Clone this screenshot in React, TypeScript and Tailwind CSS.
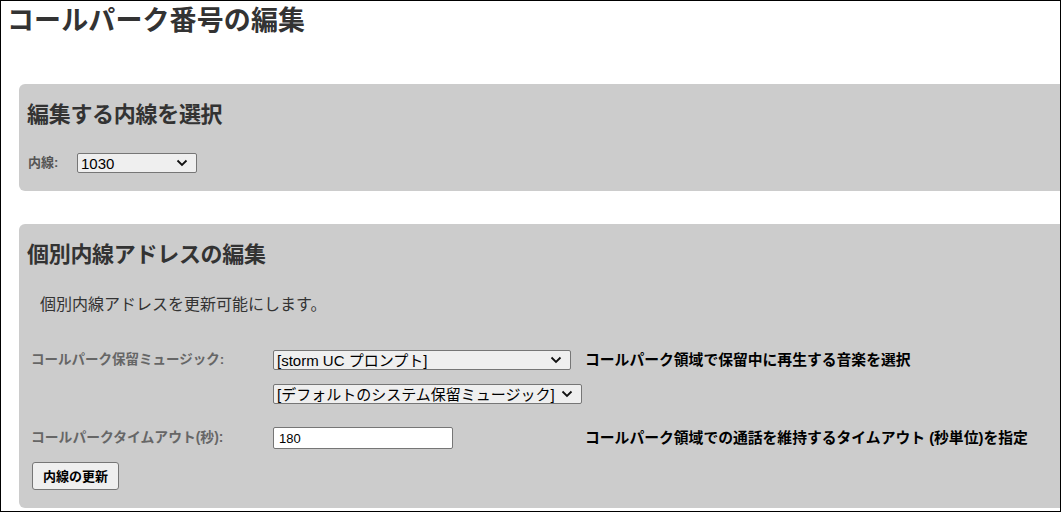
import React from 'react';

const font = 'font-["Liberation_Sans","Noto_Sans_CJK_JP",sans-serif]';

const Chevron: React.FC = () => (
  <svg width="12" height="8" viewBox="0 0 12 8" className="shrink-0">
    <path d="M1.5 1.5 L6 6 L10.5 1.5" fill="none" stroke="#111" strokeWidth="1.8" />
  </svg>
);

const FakeSelect: React.FC<{ value: string; width: string }> = ({ value, width }) => (
  <div
    className={`${width} h-[20px] flex items-center justify-between bg-[#efefef] border border-[#767676] rounded-[2px] pl-[3px] pr-[8px] text-[15px] text-black leading-none`}
  >
    <span className="whitespace-nowrap">{value}</span>
    <Chevron />
  </div>
);

const App: React.FC = () => {
  return (
    <div className={`w-[1061px] h-[512px] border border-black overflow-hidden bg-white ${font}`}>
      <h1 className="text-[27px] font-bold text-[#333] leading-[32px] pl-[6px] pt-[4px] tracking-[0.1px]">
        コールパーク番号の編集
      </h1>

      {/* select extension */}
      <section className="mt-[47px] ml-[18px] bg-[#cccccc] rounded-l-[6px] h-[107px] pt-[18px] pl-[8px]">
        <h2 className="text-[22px] font-bold text-[#333] leading-[26px] tracking-[-0.3px]">編集する内線を選択</h2>
        <div className="flex items-center mt-[25px]">
          <span className="text-[13px] font-bold text-[#555] w-[50px] pl-[1px] leading-[20px]">内線:</span>
          <FakeSelect value="1030" width="w-[120px]" />
        </div>
      </section>

      {/* edit address */}
      <section className="mt-[33px] ml-[18px] bg-[#cccccc] rounded-l-[6px] h-[284px] pt-[18px] pl-[8px]">
        <h2 className="text-[22px] font-bold text-[#333] leading-[26px] tracking-[-0.3px]">個別内線アドレスの編集</h2>
        <p className="mt-[27px] ml-[13px] text-[16px] text-[#333] leading-[20px]">
          個別内線アドレスを更新可能にします。
        </p>

        <div className="mt-[35px] ml-[4px] grid grid-cols-[242px_312px_auto] items-center leading-[20px]">
          <span className="text-[13.5px] font-bold text-[#666]">コールパーク保留ミュージック:</span>
          <FakeSelect value="[storm UC プロンプト]" width="w-[298px]" />
          <span className="text-[14.8px] font-bold text-black whitespace-nowrap">
            コールパーク領域で保留中に再生する音楽を選択
          </span>

          <span className="mt-[14px]" />
          <div className="mt-[14px] h-[20px]">
            <FakeSelect value="[デフォルトのシステム保留ミュージック]" width="w-[309px]" />
          </div>
          <span className="mt-[14px]" />

          <span className="mt-[23px] text-[13.8px] font-bold text-[#666]">コールパークタイムアウト(秒):</span>
          <div className="mt-[23px] h-[22px]">
            <input
              defaultValue="180"
              className="block w-[180px] h-[22px] bg-white border border-[#767676] rounded-[2px] px-[5px] text-[13px] text-black outline-none"
            />
          </div>
          <span className="mt-[23px] text-[14.8px] font-bold text-black whitespace-nowrap">
            コールパーク領域での通話を維持するタイムアウト (秒単位)を指定
          </span>
        </div>

        <button className="block mt-[13px] ml-[5px] h-[28px] px-[10px] bg-[#efefef] border border-[#767676] rounded-[3px] text-[13px] font-bold text-black leading-none">
          内線の更新
        </button>
      </section>
    </div>
  );
};

export default App;
